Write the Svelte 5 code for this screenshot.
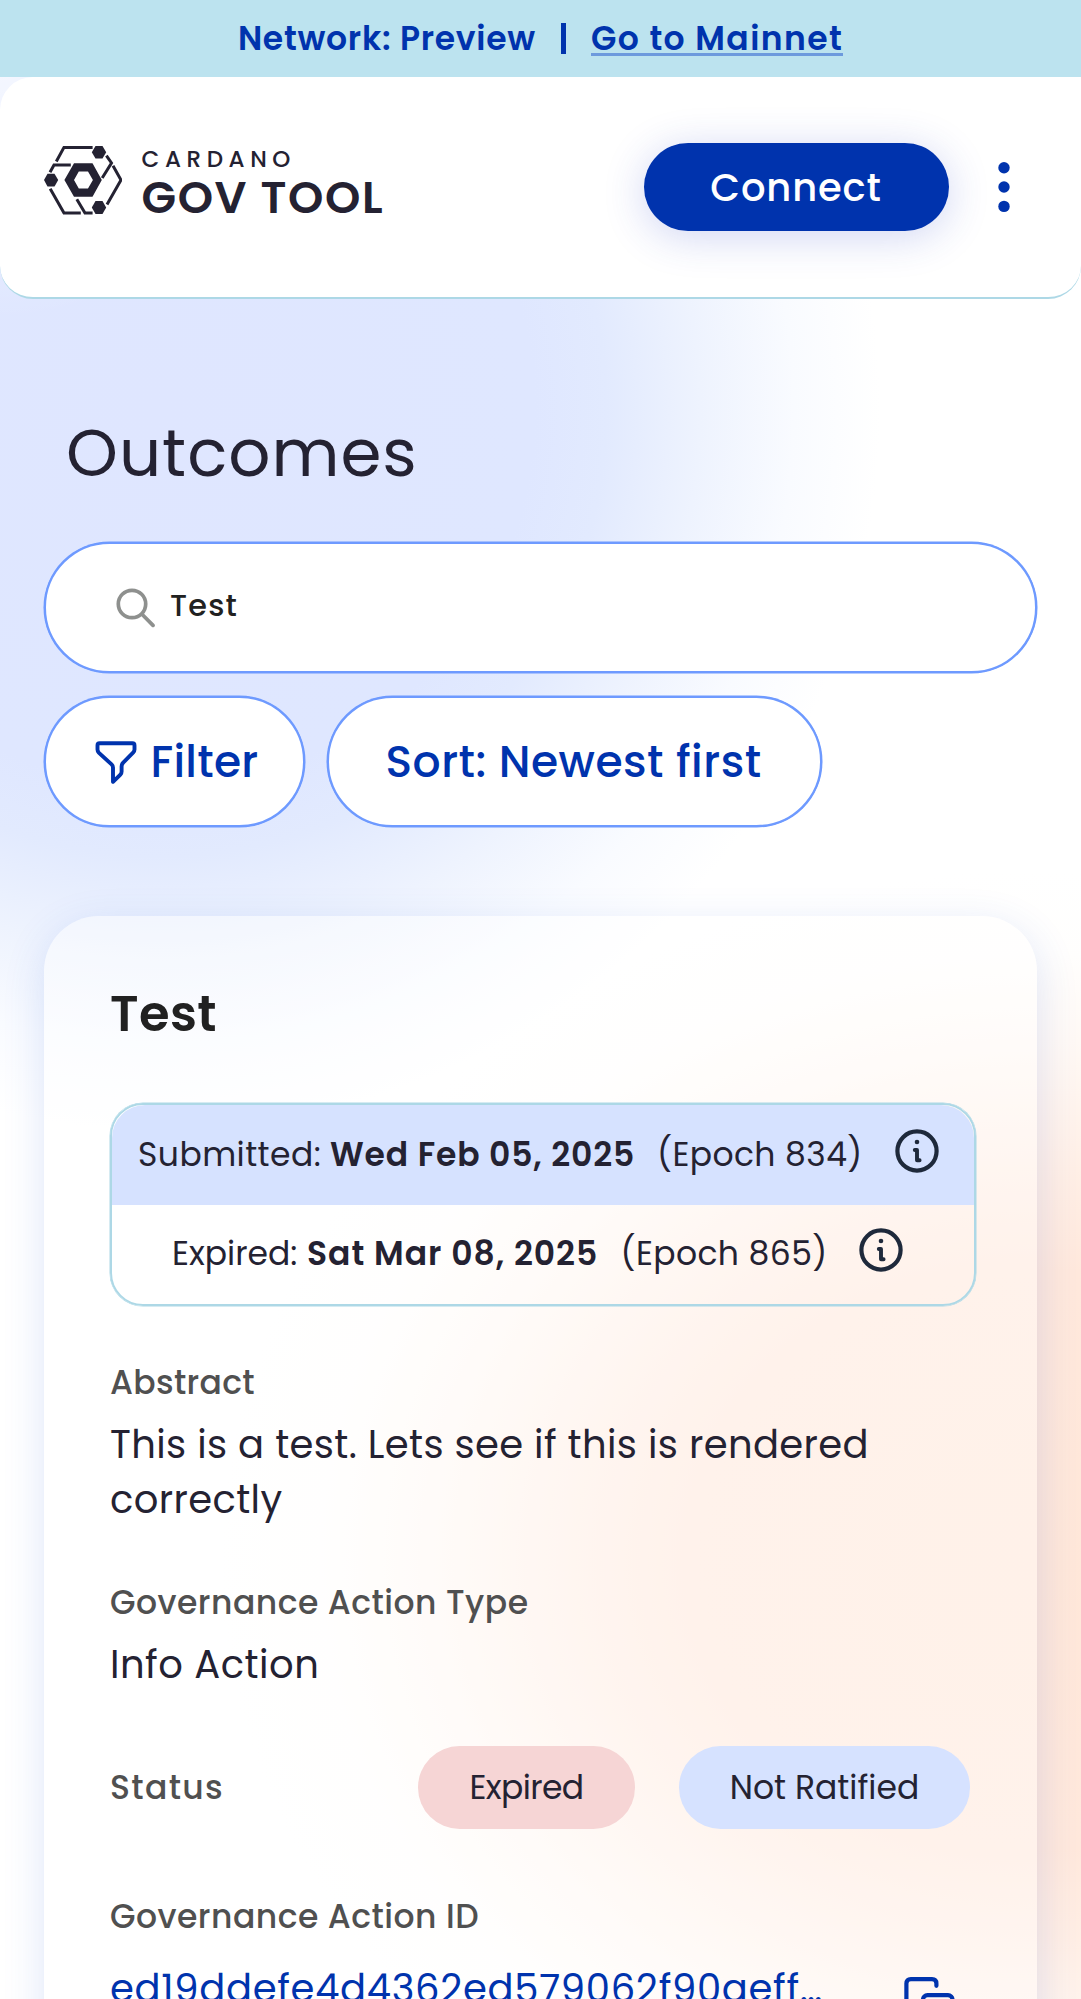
<script>
  const dates = [
    { kind: 'submitted', label: 'Submitted:', date: 'Wed Feb 05, 2025', epoch: '(Epoch 834)' },
    { kind: 'expired', label: 'Expired:', date: 'Sat Mar 08, 2025', epoch: '(Epoch 865)' }
  ];
</script>

<div class="page">
  <div class="banner">
    <span class="network">Network: Preview</span>
    <span class="divider"></span>
    <a class="mainnet" href="#mainnet">Go to Mainnet</a>
  </div>

  <header class="topbar">
    <div class="logo">
      <svg width="78" height="70" viewBox="0 0 78 70" fill="none" stroke="#242232" stroke-width="3">
        <path d="M12.3 15.5 20 1.4H48.6" />
        <path d="M62.4 9.6 67.5 17 58.2 32" />
        <path d="M69 19.8 77 34 63 58.4" />
        <path d="M6.2 42.8 20 67H36.8" />
        <path d="M32.8 53.2 41 67H48.6" />
        <path d="M6 26.2 10 19H26.8" />
        <g fill="#242232" stroke="none">
          <path d="M51.5 0H58.5L62.2 6.3 58.5 12.6H51.5L47.8 6.3Z" />
          <path d="M51.5 55H58.5L62.2 61.5 58.5 68H51.5L47.8 61.5Z" />
          <path d="M3.5 27.7H10.5L14.2 34 10.5 40.4H3.5L0 34Z" />
          <path fill-rule="evenodd" d="M30 17.3H48.5L57.8 34 48.5 50.8H30L20.4 34ZM34.8 25.4 30 34 34.8 42.6H44L48.9 34 44 25.4Z" />
        </g>
      </svg>
      <div class="wordmark">
        <span class="cardano">CARDANO</span>
        <span class="govtool">GOV TOOL</span>
      </div>
    </div>
    <div class="actions">
      <button class="connect">Connect</button>
      <svg width="12" height="52" viewBox="0 0 12 52" fill="#0033ad">
        <circle cx="6" cy="6.8" r="5.7" /><circle cx="6" cy="26" r="5.7" /><circle cx="6" cy="45.4" r="5.7" />
      </svg>
    </div>
  </header>

  <main>
    <h1>Outcomes</h1>
    <div class="search">
      <svg width="40" height="40" viewBox="0 0 40 40" fill="none" stroke="#8e908e" stroke-width="3.7" stroke-linecap="round">
        <circle cx="16" cy="16" r="13.7" /><path d="M26 26.2 37 37.4" />
      </svg>
      <span>Test</span>
    </div>
    <div class="controls">
      <button class="pill filter">
        <svg width="42" height="43" viewBox="0 0 42 43" fill="none" stroke="#0033ad" stroke-width="3.9" stroke-linejoin="round">
          <path d="M4.6 2.2H37.4Q39.5 2.2 39.5 4.4V8.6Q39.5 10.2 38.3 11.4L28.2 21.6Q26.6 23.2 26.6 25.4V30.4Q26.6 32.4 25.4 33.6L18 40.8V26.4Q18 24.8 16.6 23.4L3.7 11.6Q2.5 10.2 2.5 8.6V4.4Q2.5 2.2 4.6 2.2Z" />
        </svg>
        <span>Filter</span>
      </button>
      <button class="pill sort">Sort: Newest first</button>
    </div>

    <article class="card">
      <h2>Test</h2>
      <div class="dates">
        {#each dates as row}
          <div class="row {row.kind}">
            <span class="when">{row.label}</span>
            <strong>{row.date}</strong>
            <span class="epoch">{row.epoch}</span>
            <svg width="44" height="44" viewBox="0 0 44 44" fill="none" stroke="#1e293b" stroke-width="4.2">
              <circle cx="22" cy="22" r="19.6" />
              <path d="M19.8 21H22V31.2H24.6" stroke-linecap="round" stroke-linejoin="round" stroke-width="3.9" />
              <circle cx="22" cy="13" r="2.3" fill="#1e293b" stroke="none" />
            </svg>
          </div>
        {/each}
      </div>

      <section class="abstract">
        <h3>Abstract</h3>
        <p>This is a test. Lets see if this is rendered<br />correctly</p>
      </section>
      <section class="type">
        <h3>Governance Action Type</h3>
        <p>Info Action</p>
      </section>
      <section class="status">
        <h3>Status</h3>
        <span class="chip expired-chip">Expired</span>
        <span class="chip ratified">Not Ratified</span>
      </section>
      <section class="ident">
        <h3>Governance Action ID</h3>
        <div class="hash">
          <span>ed19ddefe4d4362ed579062f90aeff…</span>
          <svg width="54" height="54" viewBox="0 0 54 54" fill="none" stroke="#0033ad" stroke-width="4.2" stroke-linecap="round" stroke-linejoin="round">
            <rect x="19" y="18.2" width="29.5" height="31" rx="4.5" />
            <path d="M9 34H6.8Q2.4 34 2.4 29.6V6.6Q2.4 2.2 6.8 2.2H28Q32.4 2.2 32.4 6.6V8.8" />
          </svg>
        </div>
      </section>
    </article>
  </main>
</div>

<style>
  :global(body) { background: #fff; }
  .page {
    box-sizing: border-box; width: 1081px; height: 1999px; overflow: hidden;
    font-family: Poppins, Inter, 'Open Sans', sans-serif; color: #242232;
    background:
      radial-gradient(circle 260px at 0 60px, rgba(255, 255, 255, .7) 0%, rgba(255, 255, 255, 0) 100%),
      radial-gradient(ellipse 820px 690px at 1040px 1560px, #ffe7d9 0%, #ffe8dc 42%, rgba(255, 235, 224, .85) 55%, rgba(255, 243, 235, .55) 74%, rgba(255, 252, 249, .3) 88%, rgba(255, 255, 255, 0) 100%),
      radial-gradient(circle 720px at 160px 410px, #dfe6ff 0%, #dfe7ff 52%, #e2eafe 62%, #eef3fe 75%, #f9fbff 88%, rgba(255, 255, 255, 0) 100%),
      #fff;
  }
  .banner {
    display: flex; align-items: center; justify-content: center; height: 77px;
    background: #bce3ef; color: #0033ad; font-size: 33px; font-weight: 600; line-height: 40px;
  }
  .network { letter-spacing: .73px; }
  .divider { width: 5px; height: 31px; margin: 0 25px; background: #0033ad; }
  .mainnet {
    color: #0033ad; letter-spacing: 1.4px; line-height: 28px;
    text-decoration: none; border-bottom: 3px solid #6d9add; margin-bottom: -3px;
  }
  .topbar {
    box-sizing: border-box; display: flex; justify-content: space-between; height: 222px;
    padding: 66px 71.5px 0 44px; background: #fff; border-bottom: 2px solid #add8e6; border-radius: 33px;
  }
  .logo { display: flex; padding-top: 3px; gap: 19.5px; }
  .wordmark { display: flex; flex-direction: column; }
  .cardano { font-size: 23px; line-height: 24px; padding-top: 1px; letter-spacing: 5.6px; font-weight: 500; }
  .govtool { font-size: 45px; line-height: 50px; font-weight: 600; letter-spacing: 1.6px; margin-top: 2px; }
  .actions { display: flex; gap: 49px; align-items: center; height: 88px; }
  .connect {
    width: 305px; height: 88px; border: 0; border-radius: 44px; padding: 1px 0 0; background: #0033ad; color: #fff;
    font: inherit; font-size: 38.5px; font-weight: 500; letter-spacing: .85px;
    box-shadow: 0 6px 41px rgba(47, 70, 200, .22);
  }
  main { padding: 114px 44px 0; }
  h1 { margin: 0 0 49px 22px; font-size: 66px; line-height: 80px; font-weight: 400; letter-spacing: 1px; }
  .search {
    box-sizing: border-box; display: flex; align-items: center; gap: 14px; height: 131px;
    padding: 0 70px; border: 2px solid #6e9aff; border-radius: 66px; background: #fff;
    box-shadow: 0 0 0 .5px #6e9aff;
    color: #212121; font-size: 30.25px; font-weight: 500; letter-spacing: 1.2px;
  }
  .search span { margin-top: -4px; }
  .controls { display: flex; gap: 22px; margin-top: 23px; }
  .pill {
    box-sizing: border-box; display: flex; align-items: center; justify-content: center; height: 131px;
    padding: 0 2px 1px 0; border: 2px solid #6e9aff; border-radius: 66px; background: #fff; color: #0033ad;
    box-shadow: 0 0 0 .5px #6e9aff;
    font: inherit; font-size: 44px; font-weight: 500; letter-spacing: .52px;
  }
  .filter { width: 261px; gap: 13px; padding: 0 0 1px 5px; letter-spacing: .3px; }
  .filter svg { margin-top: 2px; }
  .sort { width: 495px; }
  .card {
    box-sizing: border-box; height: 1300px; margin-top: 89px; padding: 70px 61px 0 66px; border-radius: 55px;
    background: rgba(255, 255, 255, .42); box-shadow: 0 11px 41px rgba(47, 98, 220, .16);
  }
  h2 { margin: 0; color: #212121; font-size: 49.5px; line-height: 56px; font-weight: 600; letter-spacing: .4px; }
  .dates { box-sizing: border-box; height: 203px; margin-top: 61px; border: 2px solid #add8e6; border-radius: 33px; box-shadow: 0 0 0 .5px #add8e6; }
  .row { box-sizing: border-box; display: flex; align-items: center; height: 99.5px; font-size: 33px; line-height: 40px; white-space: nowrap; }
  .row svg { margin-top: -8px; }
  .row strong { font-weight: 600; }
  .epoch { letter-spacing: .4px; }
  .submitted { background: #d6e2ff; padding-left: 26px; border-radius: 33px 33px 0 0; }
  .submitted .when { width: 192px; letter-spacing: .45px; }
  .submitted strong { width: 327px; letter-spacing: .83px; }
  .submitted .epoch { width: 238px; }
  .expired { padding-left: 60px; }
  .expired .when { width: 135px; }
  .expired strong { width: 313.5px; letter-spacing: .98px; }
  .expired .epoch { width: 238px; }
  h3 { margin: 0; color: #505050; font-size: 33px; line-height: 40px; font-weight: 500; letter-spacing: .48px; }
  p { margin: 0; font-size: 38.5px; line-height: 55px; letter-spacing: .37px; }
  .abstract { margin-top: 57px; }
  .abstract h3 { letter-spacing: .32px; }
  .abstract p { margin-top: 14px; }
  .type { margin-top: 56px; }
  .type p { margin-top: 14px; letter-spacing: .5px; }
  .status { display: flex; align-items: center; height: 83px; margin-top: 54px; }
  .status h3 { width: 308px; letter-spacing: 1.35px; }
  .chip { display: flex; align-items: center; justify-content: center; height: 83px; border-radius: 42px; font-size: 33px; }
  .expired-chip { width: 217px; margin-right: 44px; background: #f6d5d5; letter-spacing: -.6px; }
  .ratified { width: 291px; background: #d6e2ff; }
  .ident { margin-top: 68px; }
  .hash { display: flex; justify-content: space-between; margin-top: 24px; padding-right: 18px; color: #0033ad; font-size: 38.5px; line-height: 55px; letter-spacing: .69px; }
  .hash svg { margin-top: 16px; }
</style>
